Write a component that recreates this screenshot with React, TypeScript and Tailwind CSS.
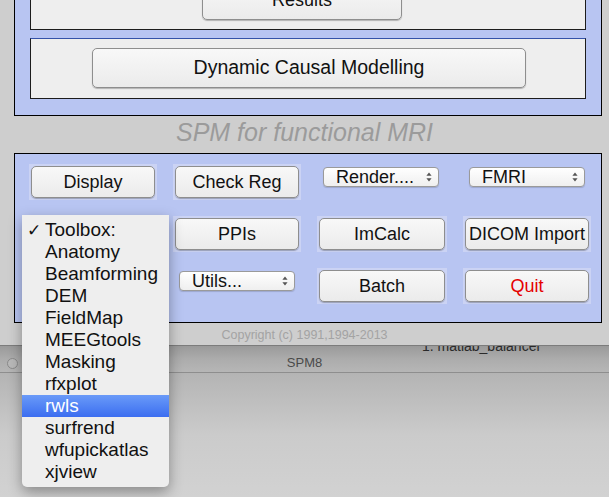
import React from "react";

const font = "font-['Liberation_Sans','Helvetica',Arial,sans-serif]";

function Btn({ label, red = false, className = "" }: { label: string; red?: boolean; className?: string }) {
  return (
    <div
      className={`flex items-center justify-center rounded-[5px] border border-[#8e8e8e] bg-gradient-to-b from-[#f8f8f8] to-[#ebebeb] shadow-[0_1px_1px_rgba(0,0,0,0.25)] text-[18px] ${
        red ? "text-[#e50000]" : "text-[#111]"
      } ${className}`}
    >
      {label}
    </div>
  );
}

function Arrows() {
  return (
    <svg width="6" height="10" viewBox="0 0 6 10">
      <path d="M3 0.5 L5.6 3.8 H0.4Z M3 9.5 L5.6 6.2 H0.4Z" fill="#555" />
    </svg>
  );
}

function Popup({ label }: { label: string }) {
  return (
    <div className="flex h-[20px] w-[116px] items-center justify-between rounded-[4px] border border-[#9a9a9a] bg-gradient-to-b from-[#ffffff] to-[#efefef] pl-[12px] pr-[6px] text-[18px] leading-[20px] text-[#111] shadow-[0_1px_1px_rgba(0,0,0,0.15)]">
      <span>{label}</span>
      <Arrows />
    </div>
  );
}

function BtnCell({ label, red }: { label: string; red?: boolean }) {
  return (
    <div className="h-[36px] bg-[#cbd3f4] p-[2px]">
      <Btn label={label} red={red} className="h-full w-full" />
    </div>
  );
}

function PopCell({ label }: { label: string }) {
  return (
    <div className="h-[36px] pl-[6px] pt-[3px]">
      <Popup label={label} />
    </div>
  );
}

const toolboxes = [
  "Toolbox:",
  "Anatomy",
  "Beamforming",
  "DEM",
  "FieldMap",
  "MEEGtools",
  "Masking",
  "rfxplot",
  "rwls",
  "surfrend",
  "wfupickatlas",
  "xjview",
];

export default function App() {
  return (
    <div className={`relative flex h-[497px] w-[609px] flex-col overflow-hidden bg-[#cecece] ${font}`}>
      {/* upper panel, cut off at the top */}
      <div className="ml-[14px] w-[588px] border-x border-b border-black bg-[#b8c5f2] px-[15px] pb-[16px]">
        <div className="h-[30px] overflow-hidden border-x border-b border-[#1c1c1c] bg-[#eeeeee]">
          <Btn label="Results" className="-mt-[20px] ml-[171px] h-[40px] w-[200px]" />
        </div>
        <div className="mt-[8px] h-[61px] border border-[#1c1c1c] border-t-[#3452a8] bg-[#eeeeee] pl-[61px] pt-[9px]">
          <Btn label="Dynamic Causal Modelling" className="h-[40px] w-[434px] !text-[19.5px]" />
        </div>
      </div>

      <div className="flex h-[37px] items-center justify-center pb-[3px] text-[25px] italic text-[#9b9b9b]">
        SPM for functional MRI
      </div>

      {/* lower panel */}
      <div className="ml-[14px] h-[170px] w-[588px] border border-black bg-[#b8c5f2] pl-[14px] pt-[10px]">
        <div className="grid grid-cols-[128px_128px_130px_128px] gap-x-[16px] gap-y-[16px]">
          <BtnCell label="Display" />
          <BtnCell label="Check Reg" />
          <PopCell label="Render...." />
          <PopCell label="FMRI" />

          <PopCell label="" />
          <BtnCell label="PPIs" />
          <BtnCell label="ImCalc" />
          <BtnCell label="DICOM Import" />

          <div className="h-[36px]" />
          <PopCell label="Utils..." />
          <BtnCell label="Batch" />
          <BtnCell label="Quit" red />
        </div>
      </div>

      <div className="flex h-[22px] items-center justify-center pt-[3px] text-[12.5px] text-[#a3a3a3]">
        Copyright (c) 1991,1994-2013
      </div>

      {/* window behind */}
      <div className="flex flex-1 flex-col">
        <div className="relative flex h-[27px] items-center overflow-hidden border-t border-[#7c7c7c] bg-gradient-to-b from-[#9a9a9a] via-[#acacac] to-[#b6b6b6] pt-[8px]">
          <div className="ml-[7px] h-[11px] w-[11px] rounded-full border border-[#8a8a8a] bg-[#b9b9b9]" />
          <div className="flex-1 pr-[18px] text-center text-[13px] text-[#4a4a4a]">SPM8</div>
          <div className="absolute left-[422px] top-[-8px] text-[14px] leading-[16px] text-[#2a2a2a]">1. matlab_balancer</div>
        </div>
        <div className="h-px bg-[#8e8e8e]" />
        <div className="flex-1 bg-gradient-to-b from-[#b4b4b4] via-[#cbcbcb] to-[#d2d2d2]" />
      </div>

      {/* open toolbox menu */}
      <div className="absolute left-[22px] top-[215px] w-[147px] rounded-b-[5px] bg-[#eeeeee] py-[4px] shadow-[0_5px_14px_rgba(0,0,0,0.35)]">
        {toolboxes.map((t, i) => {
          const sel = t === "rwls";
          return (
            <div
              key={t}
              className={`flex h-[22px] items-center text-[19px] leading-[22px] ${
                sel ? "bg-gradient-to-b from-[#6a9af8] to-[#3c6df0] text-white" : "text-[#111]"
              }`}
            >
              <span className="w-[23px] pl-[5px] font-['DejaVu_Sans',sans-serif] text-[17px] leading-[22px]">{i === 0 ? "✓" : ""}</span>
              <span>{t}</span>
            </div>
          );
        })}
      </div>
    </div>
  );
}
